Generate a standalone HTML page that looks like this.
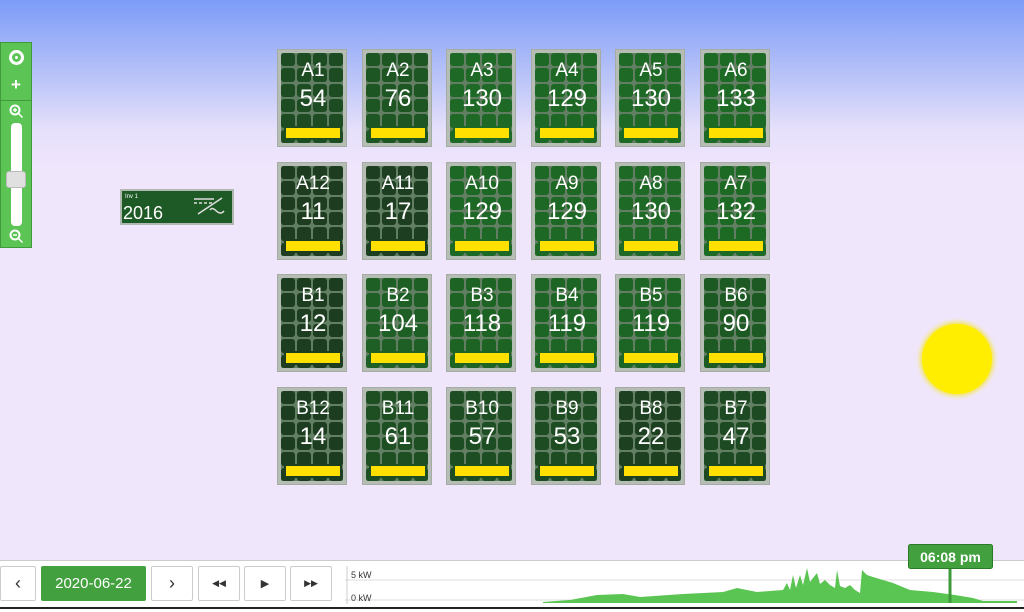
<!DOCTYPE html>
<html><head><meta charset="utf-8"><style>
*{box-sizing:border-box;margin:0;padding:0}
body{width:1024px;height:612px;overflow:hidden;position:relative;font-family:"Liberation Sans",Arial,sans-serif;background:linear-gradient(to bottom,#7c9cf8 0px,#b4c0f8 70px,#e6e0fb 130px,#f0e6fc 170px,#f0e6fc 612px)}
.p{position:absolute;width:70px;height:98px;background:#b5bdb5;border:1px solid #a4aca4;padding:3px}
.g{width:62px;height:90px;background:#637f63;display:grid;grid-template-columns:repeat(4,1fr);grid-template-rows:repeat(6,1fr);gap:2px;padding:0;border-radius:2px;overflow:hidden}
.g i{background:var(--c);border-radius:3px}
.y{position:absolute;left:6px;top:76px;width:58px;height:14px;background:#ffe000;border:2px solid var(--c);border-radius:2px}
.t{position:absolute;left:0;width:70px;text-align:center;color:#fff}
.l{top:10px;font-size:19px}
.n{top:35px;font-size:24px}
.btn{position:absolute;top:566px;height:35px;border:1px solid #ccc;background:#fff;border-radius:2px;display:flex;align-items:center;justify-content:center;color:#333}
</style></head><body>
<div style="position:absolute;left:0;top:42px;width:32px;height:206px;background:#5cc455;border:1px solid #3f9a3a">
 <div style="position:absolute;left:8px;top:7px;width:15px;height:15px;border-radius:50%;border:3px solid #fff"><div style="margin:3px;width:3px;height:3px;background:#fff;border-radius:50%"></div></div>
 <div style="position:absolute;left:0;top:32px;width:30px;text-align:center;color:#fff;font-weight:bold;font-size:17px">+</div>
 <div style="position:absolute;left:0;top:57px;width:31px;height:1px;background:#3f9a3a"></div>
 <svg style="position:absolute;left:8px;top:61px" width="15" height="15" viewBox="0 0 15 15" fill="none" stroke="#fff" stroke-width="2"><circle cx="6" cy="6" r="4.5"/><path d="M9.5 9.5L13.5 13.5M4 6h4M6 4v4" stroke-width="1.5"/></svg>
 <div style="position:absolute;left:10px;top:80px;width:11px;height:103px;background:#fff;border-radius:4px"></div>
 <div style="position:absolute;left:5px;top:128px;width:20px;height:17px;background:#e0e0e0;border:1px solid #bbb;border-radius:3px"></div>
 <svg style="position:absolute;left:8px;top:186px" width="15" height="15" viewBox="0 0 15 15" fill="none" stroke="#fff" stroke-width="2"><circle cx="6" cy="6" r="4.5"/><path d="M9.5 9.5L13.5 13.5M4 6h4" stroke-width="1.5"/></svg>
</div>
<div style="position:absolute;left:120px;top:189px;width:114px;height:36px;background:#1e5a25;border:2px solid #b0b8b0">
 <div style="position:absolute;left:3px;top:3px;color:#fff;font-size:6px">Inv 1</div>
 <div style="position:absolute;left:1px;top:12px;color:#fff;font-size:18px">2016</div>
 <svg style="position:absolute;left:70px;top:3px" width="40" height="28" viewBox="0 0 40 28" fill="none" stroke="#ddd" stroke-width="1.5"><path d="M2 5h20M2 9h3M7 9h3M12 9h3M17 9h3M6 20L30 4M18 16c4-6 8 8 14 1"/></svg>
</div>
<div id="panels"></div>
<div style="position:absolute;left:922px;top:324px;width:70px;height:70px;border-radius:50%;background:#ffee00;box-shadow:0 0 5px 2px #f3e64a"></div>
<div style="position:absolute;left:0;top:560px;width:1024px;height:52px;background:#fff;border-top:1px solid #ccc"></div>
<div style="position:absolute;left:0;top:607px;width:1024px;height:2px;background:#222"></div>
<div class="btn" style="left:0;width:36px;font-size:18px">&lsaquo;</div>
<div class="btn" style="left:41px;width:105px;background:#43a03f;border-color:#43a03f;color:#fff;font-size:15px">2020-06-22</div>
<div class="btn" style="left:151px;width:42px;font-size:18px">&rsaquo;</div>
<div class="btn" style="left:198px;width:42px;font-size:9px">&#9664;&#9664;</div>
<div class="btn" style="left:244px;width:42px;font-size:11px">&#9654;</div>
<div class="btn" style="left:290px;width:42px;font-size:9px">&#9654;&#9654;</div>
<svg style="position:absolute;left:0;top:0" width="1024" height="612">
 <line x1="345" y1="580" x2="1024" y2="580" stroke="#ddd"/>
 <line x1="345" y1="600" x2="1024" y2="600" stroke="#ddd"/>
 <line x1="347" y1="566" x2="347" y2="604" stroke="#ccc"/>
 <text x="351" y="578" font-size="9" fill="#333" font-family="Liberation Sans">5 kW</text>
 <text x="351" y="601" font-size="9" fill="#333" font-family="Liberation Sans">0 kW</text>
 <path fill="#5ac552" d="M543 602L570 600L597 595L623 594L640 597L683 594L723 592L737 588L757 592L783 590L787 583L790 590L793 575L796 588L800 575L803 585L807 568L810 582L813 578L817 573L820 584L825 580L830 585L835 588L837 570L840 586L845 588L850 585L855 590L860 593L862 570L867 575L873 577L893 583L910 590L933 592L955 595L973 598L983 601L1017 601L1017 603L543 603Z"/>
 <line x1="950" y1="566" x2="950" y2="603" stroke="#3f9a3a" stroke-width="3"/>
 <rect x="908.5" y="544.5" width="84" height="24" rx="2" fill="#43a03f" stroke="#2a7a27"/>
 <text x="950.5" y="562" font-size="14" font-weight="bold" fill="#fff" text-anchor="middle" font-family="Liberation Sans">06:08 pm</text>
</svg>
<script>
var d=[["A1",54],["A2",76],["A3",130],["A4",129],["A5",130],["A6",133],
["A12",11],["A11",17],["A10",129],["A9",129],["A8",130],["A7",132],
["B1",12],["B2",104],["B3",118],["B4",119],["B5",119],["B6",90],
["B12",14],["B11",61],["B10",57],["B9",53],["B8",22],["B7",47]];
var xs=[277,362,446,531,615,700],ys=[49,162,274,387],h="";
d.forEach(function(e,i){var t=e[1]/133,g=Math.round(56+50*t),c="rgb(29,"+g+","+Math.round(32+5*t)+")";
var cells="";for(var k=0;k<24;k++)cells+="<i></i>";
h+='<div class="p" style="left:'+xs[i%6]+'px;top:'+ys[Math.floor(i/6)]+'px;--c:'+c+'"><div class="g">'+cells+'</div><div class="y"></div><div class="t l">'+e[0]+'</div><div class="t n">'+e[1]+'</div></div>';});
document.getElementById("panels").innerHTML=h;
</script>
</body></html>
